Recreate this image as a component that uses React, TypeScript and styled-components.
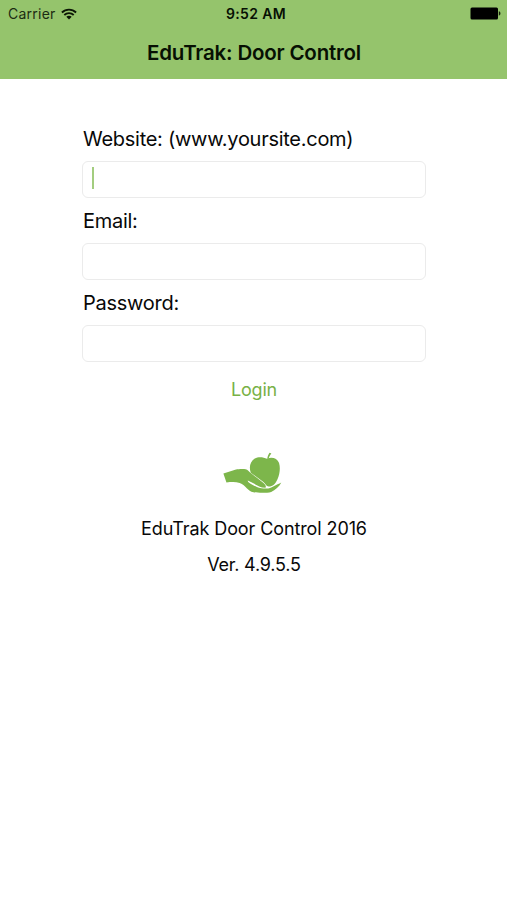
import React, { useState } from "react";
import styled, { createGlobalStyle } from "styled-components";

const Global = createGlobalStyle`
  * { box-sizing: border-box; }
  body { margin: 0; background: #fff; }
`;

const Screen = styled.div`
  min-height: 900px;
  background: #fff;
  color: #080808;
  font-family: Inter, "Liberation Sans", sans-serif;
`;

const Header = styled.header`
  height: 79px;
  background: #95c46c;
  color: #071003;
`;

const StatusBar = styled.div`
  display: grid;
  grid-template-columns: 1fr auto 1fr;
  align-items: center;
  height: 27px;
  padding: 0 6px 0 8px;
  font-size: 14px;
  line-height: 27px;
`;

const Carrier = styled.div`
  display: flex;
  align-items: center;
  gap: 5px;
  color: #1c2b12;
  letter-spacing: 0.25px;
`;

const Clock = styled.div`
  padding-left: 3px;
  font-weight: 600;
  letter-spacing: 0.35px;
`;

const BatterySlot = styled.div`
  display: flex;
  justify-content: flex-end;
`;

const Title = styled.h1`
  margin: 0;
  padding: 1px 0 0 1px;
  font-size: 20.5px;
  font-weight: 600;
  line-height: 50px;
  letter-spacing: -0.2px;
  text-align: center;
`;

const Form = styled.form`
  display: flex;
  flex-direction: column;
  width: 344px;
  margin: 45px 0 0 82px;
`;

const Label = styled.label`
  height: 37px;
  padding-left: 1px;
  font-size: 20px;
  line-height: 30px;
  letter-spacing: -0.27px;
`;

const Field = styled.div`
  display: flex;
  align-items: center;
  height: 37px;
  margin-bottom: 8px;
  padding: 0 8px;
  border: 1px solid #ebebeb;
  border-radius: 6px;
`;

const Caret = styled.span`
  width: 2px;
  height: 22px;
  margin: -3px 0 0 0.5px;
  background: #a3cd7f;
`;

const Input = styled.input`
  flex: 1;
  min-width: 0;
  padding: 0;
  border: 0;
  outline: 0;
  background: transparent;
  font: inherit;
  font-size: 18px;
`;

const LoginButton = styled.button`
  align-self: center;
  margin-top: 5px;
  padding: 0;
  border: 0;
  background: transparent;
  color: #78b146;
  font: inherit;
  font-size: 18px;
  line-height: 29px;
  letter-spacing: -0.2px;
`;

const Footer = styled.footer`
  display: flex;
  flex-direction: column;
  align-items: center;
  margin-top: 48px;
  padding-left: 1px;
  font-size: 18px;
  line-height: 36px;
`;

const Logo = styled.svg`
  display: block;
  margin: 0 4px 17px 0;
`;

const Line = styled.div<{ $tracking: number }>`
  letter-spacing: ${(p) => p.$tracking}px;
`;

const WifiIcon = () => (
  <svg width="16" height="12" viewBox="0 0 16 12" fill="none" stroke="#0b1505" strokeWidth="1.8">
    <path d="M.9 4.5C4.9.6 11.1.6 15.1 4.5" />
    <path d="M3.3 7C6 4.4 10 4.4 12.7 7" />
    <path d="M8 11.5 5.3 8.8C6.8 7.4 9.2 7.4 10.7 8.8Z" fill="#0b1505" stroke="none" />
  </svg>
);

const BatteryIcon = () => (
  <svg width="31" height="13" viewBox="0 0 31 13">
    <rect x=".5" y=".6" width="27.5" height="11.8" rx="1.5" fill="#000" />
    <path d="M28.8 4.3C31 4.8 31 8.2 28.8 8.7Z" fill="#152109" />
  </svg>
);

const HandLogo = () => (
  <Logo width="59" height="42" viewBox="0 0 60 42" preserveAspectRatio="none" fill="#7db64b">
    <path d="M45 6.8C45.2 4.8 46 2.6 47.3 .8L49.2 1.5C47.8 3 46.8 4.8 46.5 6.8Z" />
    <path d="M44.7 6.8C49.5 4.6 55.2 6.2 57 11C58.6 16 57.6 22.5 55.3 27.5C53.3 31.9 50.5 34.5 46.8 34.5C44 34.7 43.3 31.8 40.8 29.8L28.3 20.8C26.1 15.4 27.7 9.2 32.3 6.5C36 4.4 41 5 44.7 6.8Z" />
    <path d="M.4 21.5 13.2 17.6C16 16.9 20.8 16.8 23.1 17.3C25 17.7 26.5 19.7 28.3 21.1L41.2 31C43.1 32.7 44.1 34 43.3 35.8L39.7 35.4C34 33.7 30 30.4 25.2 28.6C24.9 30.4 31 33.4 34.5 35C37.5 36.5 42 36.7 44.5 36.6C48.5 36.5 54.5 32.7 59.3 30.5C57.3 34.6 53 38.1 49 40C44.5 41.2 36 41 31 40.3C25 39.5 23.5 33.2 17 31C13 29.6 8.5 30 3.5 30.4Z" />
  </Logo>
);

export default function App() {
  const [website, setWebsite] = useState("");
  return (
    <Screen>
      <Global />
      <Header>
        <StatusBar>
          <Carrier>
            Carrier
            <WifiIcon />
          </Carrier>
          <Clock>9:52 AM</Clock>
          <BatterySlot>
            <BatteryIcon />
          </BatterySlot>
        </StatusBar>
        <Title>EduTrak: Door Control</Title>
      </Header>
      <Form onSubmit={(e) => e.preventDefault()}>
        <Label htmlFor="website">Website: (www.yoursite.com)</Label>
        <Field>
          {website === "" && <Caret />}
          <Input id="website" value={website} onChange={(e) => setWebsite(e.target.value)} />
        </Field>
        <Label htmlFor="email">Email:</Label>
        <Field>
          <Input id="email" type="email" />
        </Field>
        <Label htmlFor="password">Password:</Label>
        <Field>
          <Input id="password" type="password" />
        </Field>
        <LoginButton type="submit">Login</LoginButton>
      </Form>
      <Footer>
        <HandLogo />
        <Line $tracking={-0.1}>EduTrak Door Control 2016</Line>
        <Line $tracking={-0.2}>Ver. 4.9.5.5</Line>
      </Footer>
    </Screen>
  );
}
